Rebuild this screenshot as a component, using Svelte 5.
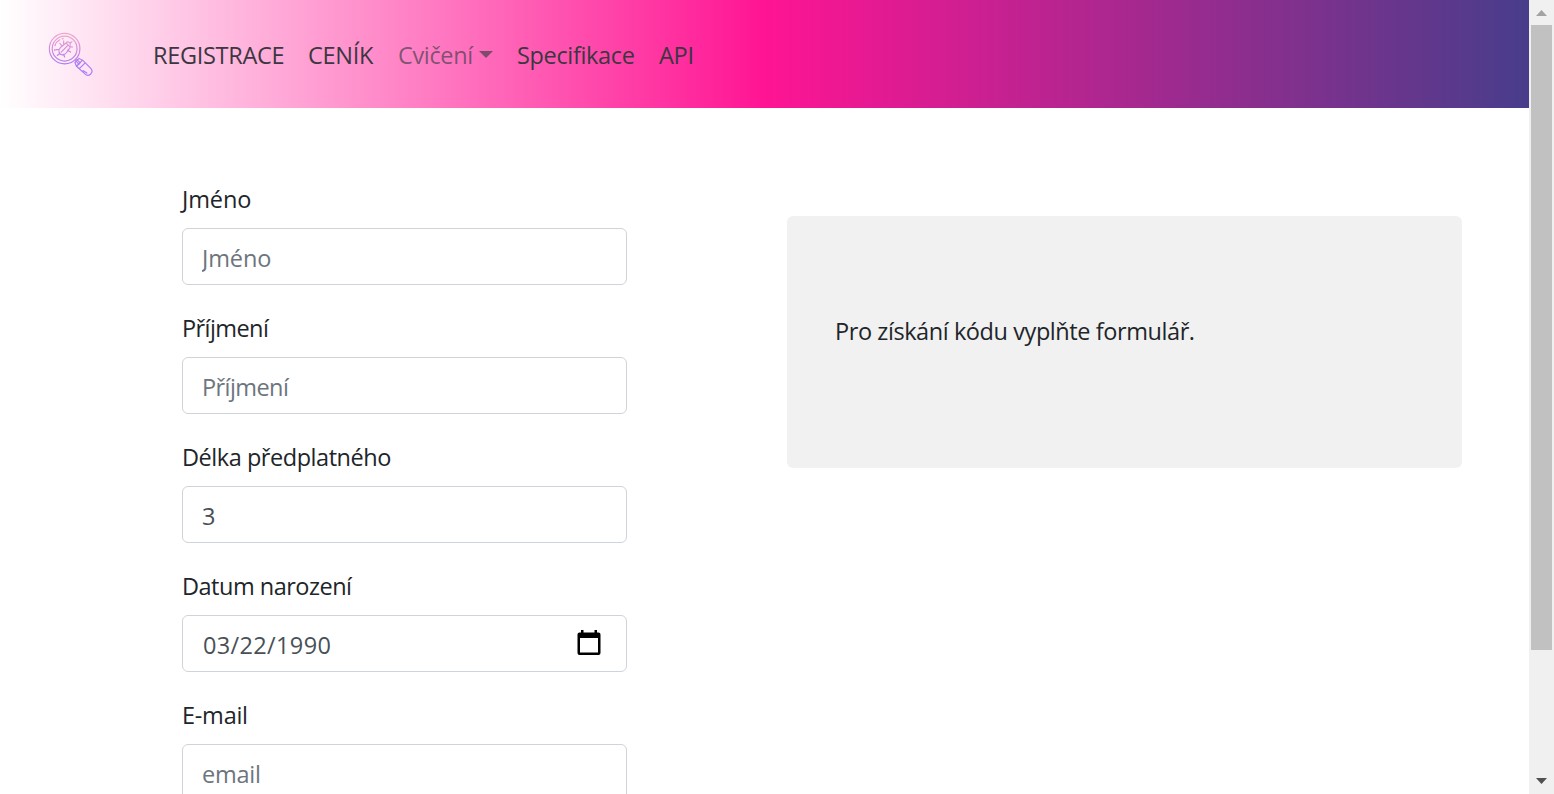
<script>
  const links = [
    { text: 'REGISTRACE', width: 131, spacing: -0.3 },
    { text: 'CENÍK', width: 66, spacing: -0.3 },
    { text: 'Cvičení', width: 95, spacing: -0.35, menu: true },
    { text: 'Specifikace', width: 118, spacing: -0.35 },
    { text: 'API', width: 34, spacing: -0.3 }
  ];
  const fields = [
    { label: 'Jméno', placeholder: 'Jméno', value: '', spacing: -0.1 },
    { label: 'Příjmení', placeholder: 'Příjmení', value: '', spacing: -0.58 },
    { label: 'Délka předplatného', placeholder: '', value: '3', spacing: -0.46 },
    { label: 'Datum narození', placeholder: '', value: '03/22/1990', spacing: -0.5, date: true },
    { label: 'E-mail', placeholder: 'email', value: '', spacing: -0.25 }
  ];
</script>

<div class="window">
  <div class="page">
    <nav>
      <svg class="logo" width="45" height="45" viewBox="0 0 46 46" fill="none" stroke="url(#ink)" stroke-width="1.2" stroke-linecap="round" stroke-linejoin="round">
        <defs>
          <linearGradient id="ink" gradientUnits="userSpaceOnUse" x1="0" y1="1" x2="0" y2="45">
            <stop offset="0" stop-color="#f0a9cb" />
            <stop offset=".4" stop-color="#cf88df" />
            <stop offset=".75" stop-color="#a779fa" />
            <stop offset="1" stop-color="#ac7bff" />
          </linearGradient>
        </defs>
        <circle cx="17" cy="17" r="15.6" />
        <circle cx="17" cy="17" r="12.7" />
        <path d="M7 14a10.5 10.5 0 0 1 5-6M14.5 7l1-.2M7 19l-.2-1" />
        <path d="M13 15.5l5.5-4.2 4.3 4.2-4 5.7c-2.3 3-6.8 3-7.5-.8-.3-2 .3-3.5 1.7-4.9zM13.5 20.5l7-7M18.500 11.3c.8-2 4.600-1.4 4.3 2M14 14l-2-2.5M11 18H8M12 22l-2.500 2M16 22.7l1 2.8M20 18.5l3 2M16 12V9M22 15l3 .3M22.5 11.5l2-1.7" />
        <path d="M28 29.2l3.8 3.8M29.2 27.8l3.8 3.8M27.5 31.2l4.2-4.2 3.6 1.8-6.2 6.2zM29.2 35l3-3M35.3 28.8l8.2 8.2c4 4-1.8 9.8-5.8 5.8L29.2 35M32.500 37l5-5M36 39.5l3.7 2.5" />
      </svg>
      <ul>
        {#each links as link}
          <li style:width="{link.width}px" style:letter-spacing="{link.spacing}px" class:menu={link.menu}>
            {link.text}{#if link.menu}<i class="caret"></i>{/if}
          </li>
        {/each}
      </ul>
    </nav>
    <main>
      <form>
        {#each fields as f}
          <label style:letter-spacing="{f.spacing}px">
            <span class="name">{f.label}</span>
            <span class="control">
              <input class:date={f.date} type="text" placeholder={f.placeholder} value={f.value} />
              {#if f.date}
                <svg width="24" height="26" viewBox="0 0 24 26">
                  <path fill="#000" fill-rule="evenodd" d="M4 0h2.5v2.5h11V0H20v2.5h1.5a2 2 0 0 1 2 2V23a2 2 0 0 1-2 2h-19a2 2 0 0 1-2-2V4.5a2 2 0 0 1 2-2H4zM3 8v14.5h18V8z" />
                </svg>
              {/if}
            </span>
          </label>
        {/each}
      </form>
      <section><p>Pro získání kódu vyplňte formulář.</p></section>
    </main>
  </div>
  <div class="scrollbar">
    <svg class="up" width="11" height="6" viewBox="0 0 11 6"><path fill="#a3a3a3" d="M5.500 0L11 6H0z" /></svg>
    <div class="thumb"></div>
    <svg class="down" width="11" height="6" viewBox="0 0 11 6"><path fill="#505050" d="M0 0h11L5.5 6z" /></svg>
  </div>
</div>

<style>
  :global(body) {
    margin: 0;
    overflow: hidden;
  }
  .window {
    display: flex;
    width: 1554px;
    height: 794px;
    overflow: hidden;
    background: #fff;
    color: #212529;
    font: 23.5px/36px 'Open Sans', 'Noto Sans', sans-serif;
  }
  .page {
    width: 1529px;
    height: 794px;
    overflow: hidden;
  }
  nav {
    display: flex;
    height: 108px;
    box-sizing: border-box;
    padding-left: 48px;
    background: linear-gradient(to right, #fff, deeppink, darkslateblue);
  }
  .logo {
    flex: none;
    margin-top: 32px;
  }
  ul {
    display: flex;
    gap: 24px;
    margin: 37px 0 0 60px;
    padding: 0;
    list-style: none;
  }
  li {
    white-space: nowrap;
    color: #3b3740;
  }
  .menu {
    display: flex;
    justify-content: space-between;
    color: rgba(52, 58, 64, 0.64);
  }
  .caret {
    margin-top: 14px;
    width: 0;
    height: 0;
    border: 7px solid transparent;
    border-top-color: rgba(52, 58, 64, 0.64);
    border-bottom: 0;
  }
  main {
    display: flex;
    align-items: flex-start;
    padding: 73px 0 0 182px;
  }
  form {
    width: 445px;
    display: flex;
    flex-direction: column;
    gap: 25px;
  }
  label {
    display: flex;
    flex-direction: column;
    gap: 11px;
  }
  .name {
    height: 36px;
    white-space: nowrap;
  }
  .control {
    display: flex;
    align-items: center;
    box-sizing: border-box;
    height: 57px;
    padding: 0 25px 0 19px;
    border: 1px solid #ced4da;
    border-radius: 6px;
  }
  .control svg {
    margin-bottom: 1px;
  }
  input {
    flex: 1;
    min-width: 0;
    height: 36px;
    box-sizing: border-box;
    margin: 3px 0 0;
    padding: 0;
    border: 0;
    outline: 0;
    background: none;
    font: inherit;
    letter-spacing: inherit;
    color: #495057;
  }
  .date {
    padding-left: 1px;
    letter-spacing: 0;
    word-spacing: 0;
    letter-spacing: 0.35px;
  }
  input::placeholder {
    color: #6c757d;
    opacity: 1;
  }
  section {
    box-sizing: border-box;
    width: 675px;
    height: 252px;
    margin: 35px 0 0 160px;
    padding: 97px 48px;
    border-radius: 6px;
    background: #f1f1f1;
  }
  p {
    margin: 0;
    white-space: nowrap;
    letter-spacing: -0.42px;
  }
  .scrollbar {
    display: flex;
    flex-direction: column;
    width: 25px;
    height: 794px;
    background: #f0f0f0;
  }
  .up {
    margin: 10px 0 0 7px;
  }
  .thumb {
    width: 21px;
    height: 625px;
    margin: 9px 2px 0;
    background: #c1c1c1;
  }
  .down {
    margin: 128px 0 0 7px;
  }
</style>
